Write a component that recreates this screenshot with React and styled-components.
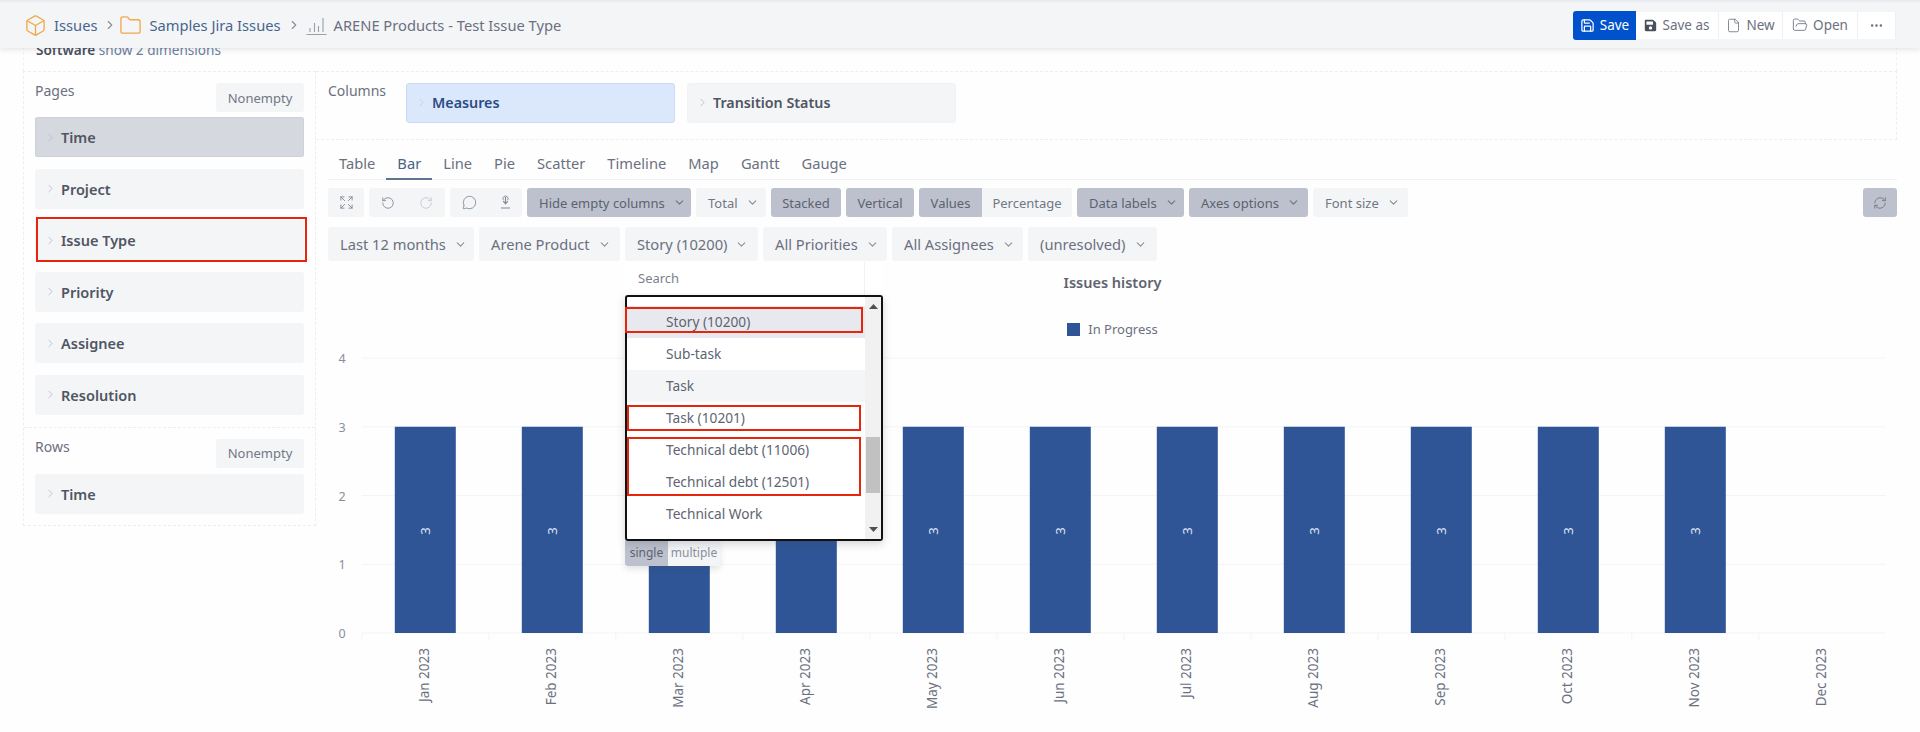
import React from "react";
import styled, { createGlobalStyle } from "styled-components";
import {
  Box,
  ChevronDown,
  ChevronRight,
  Ellipsis,
  Expand,
  File,
  Folder,
  FolderOpen,
  MessageCircle,
  RefreshCw,
  RotateCcw,
  RotateCw,
  Save,
} from "lucide-react";
import { FaSave } from "react-icons/fa";

const GlobalStyle = createGlobalStyle`
  html, body {
    margin: 0;
    background: #fff;
    font-family: "Noto Sans", "Open Sans", sans-serif;
    color: #5e6472;
  }
  * { box-sizing: border-box; }
`;

const Page = styled.div`
  width: 1920px;
  height: 732px;
  overflow: hidden;
  background: #fefefe;
`;

const Header = styled.header`
  position: relative;
  z-index: 10;
  height: 48px;
  display: flex;
  align-items: center;
  justify-content: space-between;
  padding: 0 24px;
  background: #f4f5f7;
  border-top: 2px solid #ebecef;
  box-shadow: 0 2px 5px rgba(60, 65, 80, 0.12);
`;

const Crumbs = styled.nav`
  display: flex;
  align-items: center;
  font-size: 14.7px;
`;

const CrumbLink = styled.span`
  margin-left: 7px;
  color: ${(p) => (p.$muted ? "#6b7080" : "#46668f")};
`;

const CrumbSep = styled(ChevronRight)`
  margin: 0 ${(p) => p.$after}px 0 6px;
  color: #8b909c;
`;

const Actions = styled.div`
  display: flex;
  align-items: center;
`;

const ActionBtn = styled.button`
  display: flex;
  align-items: center;
  justify-content: center;
  gap: 5px;
  width: ${(p) => p.$w}px;
  height: ${(p) => (p.$primary ? 29 : 27)}px;
  padding: 0;
  font: inherit;
  font-size: 13.5px;
  color: ${(p) => (p.$primary ? "#fff" : "#6b7080")};
  background: ${(p) => (p.$primary ? "#0052cc" : "#fff")};
  border: 0;
  border-right: ${(p) => (p.$primary ? "0" : "1px solid #eeeff2")};
  border-radius: ${(p) => (p.$primary ? "3px 0 0 3px" : "0")};
`;

const Body = styled.div`
  padding: 0 23px;
`;

const DimensionRow = styled.div`
  height: 30px;
  margin-top: -7px;
  padding: 0 12px;
  font-size: 13.6px;
  line-height: 18px;
  color: #6b7f9e;
  border-left: 1px dashed #f0f1f4;
  border-right: 1px dashed #f0f1f4;

  b {
    font-weight: 600;
    color: #4a4f5e;
  }
`;

const Layout = styled.div`
  display: grid;
  grid-template-columns: 293px 1fr;
  align-items: start;
`;

const LeftPanel = styled.aside`
  border: 1px dashed #eceef2;
`;

const Section = styled.section`
  padding: ${(p) => p.$pad};
  border-top: ${(p) => (p.$divided ? "1px dashed #eceef2" : "0")};
`;

const SectionHead = styled.div`
  display: flex;
  align-items: flex-start;
  justify-content: space-between;
  margin-bottom: ${(p) => p.$gap}px;
`;

const SectionLabel = styled.div`
  margin-top: -2px;
  font-size: 14px;
  line-height: 19px;
  color: #6b7080;
`;

const NonemptyBtn = styled.div`
  width: 88px;
  height: 29px;
  display: flex;
  align-items: center;
  justify-content: center;
  font-size: 13px;
  color: #727784;
  background: #f4f5f7;
  border-radius: 3px;
`;

const ItemList = styled.div`
  display: flex;
  flex-direction: column;
  gap: 11.6px;
`;

const Item = styled.div`
  position: relative;
  height: 40px;
  display: flex;
  align-items: center;
  padding-left: 9px;
  font-size: 14.5px;
  font-weight: 600;
  color: #505563;
  background: ${(p) => (p.$active ? "#d6d8df" : "#f4f5f7")};
  border-radius: 3px;
  box-shadow: ${(p) => (p.$active ? "inset 0 0 0 1px #cfd1d9" : "none")};

  svg {
    margin-right: 4px;
    color: #b5b8c2;
  }
`;

const ItemMark = styled.div`
  position: absolute;
  top: -3px;
  bottom: -2px;
  left: 1px;
  right: -3px;
  border: 2px solid #e5260d;
`;

const RightPanel = styled.main`
  min-width: 0;
`;

const ColumnsRow = styled.div`
  height: 69px;
  display: flex;
  align-items: flex-start;
  padding: 11px 12px 0;
  border-top: 1px dashed #eceef2;
  border-right: 1px dashed #eceef2;
  border-bottom: 1px dashed #eceef2;
`;

const ColumnsLabel = styled.div`
  width: 78px;
  margin-top: -2px;
  font-size: 14px;
  line-height: 19px;
  color: #6b7080;
`;

const ColumnChip = styled.div`
  width: 269px;
  height: 40px;
  margin-right: 12px;
  display: flex;
  align-items: center;
  padding: 0 0 1px 8px;
  font-size: 14.3px;
  font-weight: 600;
  color: ${(p) => (p.$active ? "#2b4c85" : "#505563")};
  background: ${(p) => (p.$active ? "#dbe8fb" : "#f4f5f7")};
  border: 1px solid ${(p) => (p.$active ? "#c8daf6" : "#f1f2f5")};
  border-radius: 3px;

  svg {
    margin-right: 4px;
    color: ${(p) => (p.$active ? "#b8cbe6" : "#b5b8c2")};
  }
`;

const ChartPane = styled.div`
  padding-left: 12px;
`;

const Tabs = styled.div`
  height: 40px;
  display: flex;
  align-items: flex-end;
  border-bottom: 1px solid #f0f1f3;
`;

const Tab = styled.div`
  height: 33px;
  padding: 0 11px;
  margin-bottom: -1px;
  font-size: 14.7px;
  line-height: 32px;
  color: ${(p) => (p.$active ? "#4a6285" : "#6b7080")};
  border-bottom: 2px solid ${(p) => (p.$active ? "#5d7690" : "transparent")};
`;

const Toolbar = styled.div`
  height: 29px;
  margin-top: 8px;
  display: flex;
  gap: 5px;
`;

const ToolGroup = styled.div`
  display: flex;
  border-radius: 3px;
  overflow: hidden;
`;

const ToolBtn = styled.div`
  width: ${(p) => p.$w}px;
  height: 29px;
  display: flex;
  align-items: center;
  justify-content: ${(p) => (p.$menu ? "flex-start" : "center")};
  gap: 8px;
  padding-left: ${(p) => (p.$menu ? 12 : 0)}px;
  font-size: 13px;
  color: ${(p) => (p.$on ? "#5c6270" : "#727784")};
  background: ${(p) => (p.$on ? "#bcc1cd" : "#f4f5f7")};
  border-radius: ${(p) => (p.$flat ? "0" : "3px")};

  svg {
    color: ${(p) => (p.$dim ? "#c4c7cf" : p.$on ? "#6c7280" : "#858a96")};
  }
`;

const ToolSpacer = styled.div`
  flex: 1;
`;

const FilterRow = styled.div`
  height: 34px;
  margin-top: 10px;
  display: flex;
  gap: 5px;
`;

const FilterSlot = styled.div`
  position: relative;
`;

const FilterBtn = styled.div`
  width: ${(p) => p.$w}px;
  height: 34px;
  display: flex;
  align-items: center;
  gap: 8px;
  padding-left: 12px;
  font-size: 14.7px;
  color: #6b7080;
  background: #f4f5f7;
  border-radius: 3px;

  svg {
    color: #8b909c;
  }
`;

const Dropdown = styled.div`
  position: absolute;
  z-index: 5;
  top: 35px;
  left: 0;
  width: 258px;
`;

const SearchBox = styled.div`
  width: 240px;
  height: 33px;
  padding: 0 13px;
  font-size: 13px;
  line-height: 32px;
  color: #7b7f8b;
  background: #fff;
  border-right: 1px solid #f1f2f4;
  box-shadow: 18px 0 0 #fff;
`;

const ListBox = styled.div`
  position: relative;
  height: 246px;
  padding-top: 8.5px;
  background: #fff;
  border: 2px solid #111;
  border-radius: 3px;
  box-shadow: 0 3px 8px rgba(60, 65, 80, 0.22);
`;

const Option = styled.div`
  width: 238px;
  height: 32px;
  padding-left: 39px;
  font-size: 13.7px;
  line-height: 32px;
  color: #5e6472;
  background: ${(p) => p.$bg || "transparent"};
`;

const OptionMark = styled.div`
  position: absolute;
  left: ${(p) => p.$left}px;
  width: ${(p) => p.$width}px;
  top: ${(p) => p.$top}px;
  height: ${(p) => p.$height}px;
  border: 2px solid #e5260d;
`;

const ScrollBar = styled.div`
  position: absolute;
  top: 0;
  right: 0;
  bottom: 0;
  width: 16px;
  display: flex;
  flex-direction: column;
  align-items: center;
  justify-content: space-between;
  padding: 7px 0;
  background: #f1f1f1;
`;

const ScrollThumb = styled.div`
  position: absolute;
  top: 140px;
  left: 1px;
  width: 14px;
  height: 56px;
  background: #c1c1c1;
`;

const ModeSwitch = styled.div`
  display: flex;
  width: 95px;
  height: 25px;
  border-radius: 0 0 3px 3px;
  overflow: hidden;
  box-shadow: 0 3px 6px rgba(60, 65, 80, 0.15);
`;

const ModeBtn = styled.div`
  flex: ${(p) => p.$grow};
  text-align: center;
  font-size: 12px;
  line-height: 24px;
  color: ${(p) => (p.$on ? "#5c6270" : "#8a8f9b")};
  background: ${(p) => (p.$on ? "#bcc1cd" : "#f4f5f7")};
`;

const ChartTitle = styled.div`
  margin-top: 11px;
  text-align: center;
  font-size: 14.5px;
  line-height: 20px;
  font-weight: 600;
  color: #5e6370;
`;

const Legend = styled.div`
  height: 20px;
  margin-top: 27px;
  display: flex;
  align-items: center;
  justify-content: center;
  gap: 8px;
  font-size: 13px;
  color: #6b7080;
`;

const LegendSwatch = styled.span`
  width: 13px;
  height: 13px;
  background: #2f5597;
`;

const ChartSvg = styled.svg`
  display: block;
  margin-top: 6px;
`;

const months = ["Jan", "Feb", "Mar", "Apr", "May", "Jun", "Jul", "Aug", "Sep", "Oct", "Nov", "Dec"];
const pageItems = ["Project"];
const lowerItems = ["Priority", "Assignee", "Resolution"];
const tabs = ["Table", "Bar", "Line", "Pie", "Scatter", "Timeline", "Map", "Gantt", "Gauge"];

function Chevron() {
  return <ChevronRight size={13} strokeWidth={1.5} />;
}

function ChartIcon() {
  return (
    <svg width="21" height="22" viewBox="0 0 21 22" fill="none" stroke="#9a9ea8" strokeWidth="1.1">
      <path d="M0.5 20.5h20M4 18v-4M8.5 18V9M12.5 18v-6M17 18V4" />
    </svg>
  );
}

function DownloadIcon() {
  return (
    <svg width="15" height="15" viewBox="0 0 15 15" fill="none" stroke="#858a96" strokeWidth="1.2">
      <path d="M7.5 2v6M5.2 6.2l2.3 2.6 2.3-2.6M3 13h9" />
      <path d="M5.4 5.2a2.6 2.6 0 1 1 4.2 0" strokeWidth="0.9" />
    </svg>
  );
}

function BarChart() {
  // svg sits at x=328, y=345 on the page
  const top = 13;
  const zero = 288;
  const step = (zero - top) / 4;
  const band = 127;
  const left = 33.8;
  return (
    <ChartSvg width="1569" height="387" viewBox="0 0 1569 387" fontFamily="Noto Sans, sans-serif">
      {[0, 1, 2, 3, 4].map((v) => (
        <g key={v}>
          <line x1={left} x2={left + band * 12} y1={zero - v * step} y2={zero - v * step} stroke="#f3f4f6" />
          <text x="14" y={zero - v * step + 5} textAnchor="middle" fontSize="12.5" fill="#8a8f99">
            {v}
          </text>
        </g>
      ))}
      {months.map((m, i) => {
        const cx = left + band * i + band / 2;
        return (
          <g key={m}>
            <line x1={left + band * i} x2={left + band * i} y1={zero} y2={zero + 8} stroke="#f3f4f6" />
            {i < 11 && <rect x={cx - 30.5} y={zero - 3 * step} width="61" height={3 * step} fill="#2f5597" />}
            {i < 11 && (
              <text
                transform={`translate(${cx + 4.5} ${zero - 102}) rotate(-90)`}
                textAnchor="middle"
                fontSize="13"
                fill="#dfe6f3"
              >
                3
              </text>
            )}
            <text
              transform={`translate(${cx + 4} ${zero + 15}) rotate(-90)`}
              textAnchor="end"
              fontSize="13.5"
              fill="#6b7080"
            >
              {m} 2023
            </text>
          </g>
        );
      })}
    </ChartSvg>
  );
}

export default function App() {
  return (
    <Page>
      <GlobalStyle />
      <Header>
        <Crumbs>
          <Box size={23} color="#f0a94e" strokeWidth={1.4} />
          <CrumbLink>Issues</CrumbLink>
          <CrumbSep size={14} $after={2} />
          <Folder size={23} color="#f0a94e" strokeWidth={1.4} />
          <CrumbLink>Samples Jira Issues</CrumbLink>
          <CrumbSep size={14} $after={5} />
          <ChartIcon />
          <CrumbLink $muted>ARENE Products - Test Issue Type</CrumbLink>
        </Crumbs>
        <Actions>
          <ActionBtn $primary $w={63}>
            <Save size={15} />
            Save
          </ActionBtn>
          <ActionBtn $w={83}>
            <FaSave size={13} color="#4a4f5e" />
            Save as
          </ActionBtn>
          <ActionBtn $w={64}>
            <File size={15} strokeWidth={1.3} />
            New
          </ActionBtn>
          <ActionBtn $w={75}>
            <FolderOpen size={16} strokeWidth={1.3} />
            Open
          </ActionBtn>
          <ActionBtn $w={38}>
            <Ellipsis size={15} />
          </ActionBtn>
        </Actions>
      </Header>
      <Body>
        <DimensionRow>
          <b>Software</b> show 2 dimensions
        </DimensionRow>
        <Layout>
          <LeftPanel>
            <Section $pad="11px 11px 12px">
              <SectionHead $gap={5}>
                <SectionLabel>Pages</SectionLabel>
                <NonemptyBtn>Nonempty</NonemptyBtn>
              </SectionHead>
              <ItemList>
                <Item $active>
                  <Chevron />
                  Time
                </Item>
                {pageItems.map((t) => (
                  <Item key={t}>
                    <Chevron />
                    {t}
                  </Item>
                ))}
                <Item>
                  <Chevron />
                  Issue Type
                  <ItemMark />
                </Item>
                {lowerItems.map((t) => (
                  <Item key={t}>
                    <Chevron />
                    {t}
                  </Item>
                ))}
              </ItemList>
            </Section>
            <Section $divided $pad="11px 11px 11px">
              <SectionHead $gap={6}>
                <SectionLabel>Rows</SectionLabel>
                <NonemptyBtn>Nonempty</NonemptyBtn>
              </SectionHead>
              <Item>
                <Chevron />
                Time
              </Item>
            </Section>
          </LeftPanel>
          <RightPanel>
            <ColumnsRow>
              <ColumnsLabel>Columns</ColumnsLabel>
              <ColumnChip $active>
                <Chevron />
                Measures
              </ColumnChip>
              <ColumnChip>
                <Chevron />
                Transition Status
              </ColumnChip>
            </ColumnsRow>
            <ChartPane>
              <Tabs>
                {tabs.map((t) => (
                  <Tab key={t} $active={t === "Bar"}>
                    {t}
                  </Tab>
                ))}
              </Tabs>
              <Toolbar>
                <ToolBtn $w={36}>
                  <Expand size={15} strokeWidth={1.5} />
                </ToolBtn>
                <ToolGroup>
                  <ToolBtn $w={38} $flat>
                    <RotateCcw size={14} strokeWidth={1.5} />
                  </ToolBtn>
                  <ToolBtn $w={38} $flat $dim>
                    <RotateCw size={14} strokeWidth={1.5} />
                  </ToolBtn>
                </ToolGroup>
                <ToolGroup>
                  <ToolBtn $w={38} $flat>
                    <MessageCircle size={15} strokeWidth={1.4} />
                  </ToolBtn>
                  <ToolBtn $w={34} $flat>
                    <DownloadIcon />
                  </ToolBtn>
                </ToolGroup>
                <ToolBtn $w={164} $on $menu>
                  Hide empty columns
                  <ChevronDown size={13} />
                </ToolBtn>
                <ToolBtn $w={70} $menu>
                  Total
                  <ChevronDown size={13} />
                </ToolBtn>
                <ToolBtn $w={70} $on>
                  Stacked
                </ToolBtn>
                <ToolBtn $w={68} $on>
                  Vertical
                </ToolBtn>
                <ToolGroup>
                  <ToolBtn $w={63} $on $flat>
                    Values
                  </ToolBtn>
                  <ToolBtn $w={90} $flat>
                    Percentage
                  </ToolBtn>
                </ToolGroup>
                <ToolBtn $w={107} $on $menu>
                  Data labels
                  <ChevronDown size={13} />
                </ToolBtn>
                <ToolBtn $w={119} $on $menu>
                  Axes options
                  <ChevronDown size={13} />
                </ToolBtn>
                <ToolBtn $w={95} $menu>
                  Font size
                  <ChevronDown size={13} />
                </ToolBtn>
                <ToolSpacer />
                <ToolBtn $w={34} $on>
                  <RefreshCw size={14} strokeWidth={1.4} />
                </ToolBtn>
              </Toolbar>
              <FilterRow>
                <FilterBtn $w={146}>
                  Last 12 months
                  <ChevronDown size={13} />
                </FilterBtn>
                <FilterBtn $w={141}>
                  Arene Product
                  <ChevronDown size={13} />
                </FilterBtn>
                <FilterSlot>
                  <FilterBtn $w={133}>
                    Story (10200)
                    <ChevronDown size={13} />
                  </FilterBtn>
                  <Dropdown>
                    <SearchBox>Search</SearchBox>
                    <ListBox>
                      <Option $bg="#e8e9ef">Story (10200)</Option>
                      <Option>Sub-task</Option>
                      <Option $bg="#f4f5f7">Task</Option>
                      <Option>Task (10201)</Option>
                      <Option>Technical debt (11006)</Option>
                      <Option>Technical debt (12501)</Option>
                      <Option>Technical Work</Option>
                      <OptionMark $left={-2} $width={238} $top={10} $height={26} />
                      <OptionMark $left={0} $width={234} $top={108} $height={26} />
                      <OptionMark $left={0} $width={234} $top={140} $height={59} />
                      <ScrollBar>
                        <svg width="9" height="5" viewBox="0 0 9 5">
                          <path d="M4.5 0 9 5H0z" fill="#505050" />
                        </svg>
                        <ScrollThumb />
                        <svg width="9" height="5" viewBox="0 0 9 5">
                          <path d="M0 0h9L4.5 5z" fill="#505050" />
                        </svg>
                      </ScrollBar>
                    </ListBox>
                    <ModeSwitch>
                      <ModeBtn $on $grow={43}>
                        single
                      </ModeBtn>
                      <ModeBtn $grow={52}>multiple</ModeBtn>
                    </ModeSwitch>
                  </Dropdown>
                </FilterSlot>
                <FilterBtn $w={124}>
                  All Priorities
                  <ChevronDown size={13} />
                </FilterBtn>
                <FilterBtn $w={131}>
                  All Assignees
                  <ChevronDown size={13} />
                </FilterBtn>
                <FilterBtn $w={129}>
                  (unresolved)
                  <ChevronDown size={13} />
                </FilterBtn>
              </FilterRow>
              <ChartTitle>Issues history</ChartTitle>
              <Legend>
                <LegendSwatch />
                In Progress
              </Legend>
              <BarChart />
            </ChartPane>
          </RightPanel>
        </Layout>
      </Body>
    </Page>
  );
}
